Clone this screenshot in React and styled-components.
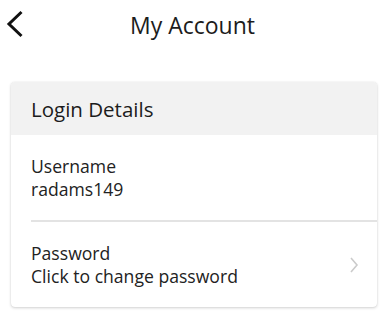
import React from "react";
import styled, { createGlobalStyle } from "styled-components";

const GlobalStyle = createGlobalStyle`
  body {
    margin: 0;
    background: #fff;
    font-family: "Open Sans", "Liberation Sans", sans-serif;
    color: #222;
  }
`;

const Page = styled.div`
  width: 389px;
  height: 319px;
  background: #fff;
`;

const TopBar = styled.div`
  position: relative;
  height: 52px;
  display: flex;
  align-items: center;
  justify-content: center;
`;

const BackButton = styled.button`
  position: absolute;
  left: 5px;
  top: 10px;
  border: none;
  background: none;
  padding: 0;
  width: 20px;
  height: 28px;
  display: flex;
  align-items: center;
  justify-content: center;
`;

const Title = styled.h1`
  margin: 0 4px 2px 0;
  font-size: 23px;
  font-weight: 400;
  color: #1c1c1c;
`;

const Card = styled.div`
  margin: 30px 12px 0 11px;
  background: #fff;
  border-radius: 4px;
  box-shadow: 0 1px 3px rgba(0, 0, 0, 0.18), 0 0 1px rgba(0, 0, 0, 0.12);
  overflow: hidden;
`;

const CardHeader = styled.div`
  height: 53px;
  background: #f2f2f2;
  display: flex;
  align-items: center;
  padding-left: 20px;
  font-size: 20.5px;
  color: #1c1c1c;
`;

const Row = styled.div`
  height: 85px;
  display: flex;
  align-items: center;
  justify-content: space-between;
  margin-left: 20px;
  padding-right: 18px;
  border-bottom: ${(p) => (p.$divider ? "2px solid #e3e3e3" : "none")};
`;

const RowText = styled.div`
  display: flex;
  flex-direction: column;
  font-size: 17.6px;
  line-height: 23px;
  color: #222;
`;

const Chevron = () => (
  <svg width="10" height="18" viewBox="0 0 10 18">
    <path d="M2 2l6 7-6 7" fill="none" stroke="#cbcbcb" strokeWidth="1.6" />
  </svg>
);

export default function App() {
  return (
    <Page>
      <GlobalStyle />
      <TopBar>
        <BackButton>
          <svg width="20" height="28" viewBox="0 0 20 28">
            <path d="M16.5 2L4 14l12.5 12" fill="none" stroke="#111" strokeWidth="3" />
          </svg>
        </BackButton>
        <Title>My Account</Title>
      </TopBar>
      <Card>
        <CardHeader>Login Details</CardHeader>
        <Row $divider>
          <RowText>
            <span>Username</span>
            <span>radams149</span>
          </RowText>
        </Row>
        <Row>
          <RowText>
            <span>Password</span>
            <span>Click to change password</span>
          </RowText>
          <Chevron />
        </Row>
      </Card>
    </Page>
  );
}
